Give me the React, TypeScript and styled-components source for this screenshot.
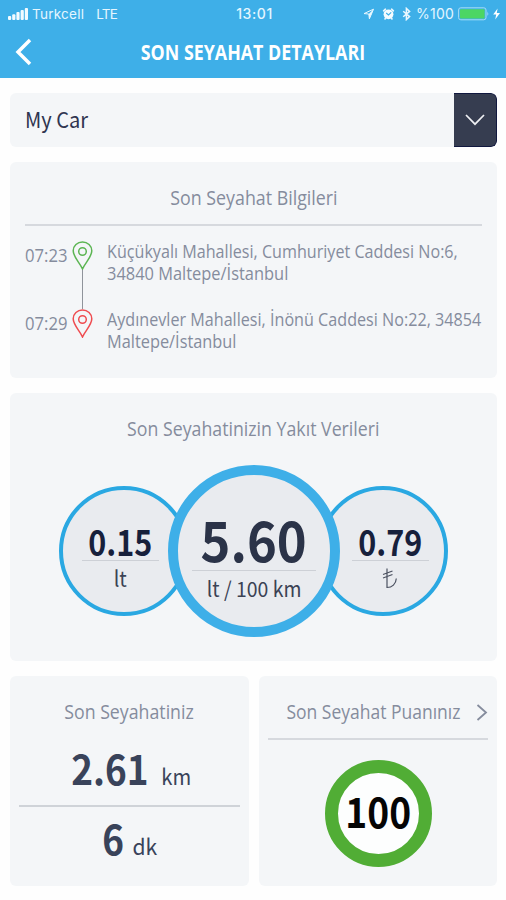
import React from 'react';
import styled, { createGlobalStyle } from 'styled-components';

const humanist = `"Open Sans", "Noto Sans", sans-serif`;
const numeric = `"Noto Sans CJK JP", "Open Sans", sans-serif`;

const GlobalStyle = createGlobalStyle`
  * { box-sizing: border-box; }
  body { margin: 0; background: #fefefe; font-family: ${humanist}; }
`;

/* Condensed text: glyphs are narrowed horizontally around the chosen origin. */
const Text = styled.span<{
  $size: number;
  $line: number;
  $narrow?: number;
  $color?: string;
  $weight?: number;
  $num?: boolean;
  $left?: boolean;
}>`
  display: block;
  white-space: nowrap;
  font-family: ${(p) => (p.$num ? numeric : humanist)};
  font-size: ${(p) => p.$size}px;
  line-height: ${(p) => p.$line}px;
  font-weight: ${(p) => p.$weight ?? 400};
  color: ${(p) => p.$color ?? '#858c9d'};
  transform: scaleX(${(p) => p.$narrow ?? 1});
  transform-origin: ${(p) => (p.$left ? 'left' : 'center')} center;
`;

const Screen = styled.main`
  width: 506px;
  height: 900px;
  overflow: hidden;
  display: flex;
  flex-direction: column;
`;

const Header = styled.header`
  height: 78px;
  flex: none;
  background: #3eafe8;
`;

const StatusBar = styled.div`
  height: 26px;
  display: grid;
  grid-template-columns: 1fr auto 1fr;
  align-items: center;
  padding: 1px 5px 0 8px;
  color: #e4f6ff;
  font: 400 13px/26px Inter, "Liberation Sans", sans-serif;
`;

const StatusGroup = styled.div<{ $end?: boolean }>`
  display: flex;
  align-items: center;
  justify-content: ${(p) => (p.$end ? 'flex-end' : 'flex-start')};
`;

const Carrier = styled.span`
  margin: 0 12px 0 4px;
  font-size: 13.5px;
  letter-spacing: 0.25px;
`;

const Network = styled.span`
  font-size: 13.5px;
  letter-spacing: -0.8px;
`;

const Clock = styled.span`
  font-weight: 500;
  font-size: 14px;
  letter-spacing: 0.6px;
`;

const Percent = styled.span`
  margin: 0 4px 0 4px;
  font-size: 14px;
  letter-spacing: 0.2px;
`;

const NavBar = styled.div`
  height: 52px;
  display: grid;
  grid-template-columns: 46px 1fr 46px;
  align-items: center;
  justify-items: center;
`;

const IconButton = styled.button`
  display: flex;
  padding: 0;
  border: 0;
  background: none;
`;

const Content = styled.div`
  padding: 15px 9px 0 10px;
  display: flex;
  flex-direction: column;
  gap: 15px;
`;

const CarSelect = styled.div`
  height: 54px;
  display: flex;
  align-items: flex-start;
  justify-content: space-between;
  padding-left: 15px;
  border-radius: 6px;
  overflow: hidden;
  background: #f4f6f8;
`;

const CarName = styled.div`
  padding-top: 10px;
`;

const SelectArrow = styled.div`
  width: 43px;
  height: 54px;
  display: flex;
  align-items: center;
  justify-content: center;
  border: 1px solid #11183f;
  border-left: 0;
  border-radius: 0 6px 6px 0;
  background: #363d50;
`;

const Card = styled.section<{ $height: number; $pad?: string }>`
  height: ${(p) => p.$height}px;
  padding: ${(p) => p.$pad ?? '0'};
  display: flex;
  flex-direction: column;
  align-items: center;
  border-radius: 6px;
  background: #f4f6f8;
`;

const Rule = styled.hr<{ $width: string; $color?: string; $thick?: number; $top?: number }>`
  width: ${(p) => p.$width};
  height: ${(p) => p.$thick ?? 2}px;
  flex: none;
  margin: ${(p) => p.$top ?? 0}px 0 0;
  border: 0;
  background: ${(p) => p.$color ?? '#d6d9de'};
`;

const Route = styled.div`
  width: 100%;
  display: grid;
  grid-template-columns: 47px 21px 1fr;
  padding-top: 15px;
`;

const Times = styled.div`
  display: flex;
  flex-direction: column;
  gap: 40px;
`;

const Track = styled.div`
  display: flex;
  flex-direction: column;
  align-items: center;
`;

const TrackLine = styled.span`
  width: 1.5px;
  height: 39px;
  background: #8f949b;
`;

const Addresses = styled.div`
  display: flex;
  flex-direction: column;
  gap: 25px;
  padding-left: 14px;
`;

const Gauges = styled.div`
  display: flex;
  align-items: center;
  justify-content: center;
  margin-top: 21px;
`;

const Gauge = styled.div<{ $big?: boolean; $pad: string }>`
  width: ${(p) => (p.$big ? 172 : 130)}px;
  height: ${(p) => (p.$big ? 172 : 130)}px;
  flex: none;
  margin: ${(p) => (p.$big ? '0 -22px 0 -21px' : '0')};
  padding: ${(p) => p.$pad};
  z-index: ${(p) => (p.$big ? 1 : 0)};
  display: flex;
  flex-direction: column;
  align-items: center;
  border: ${(p) => (p.$big ? 10 : 4)}px solid ${(p) => (p.$big ? '#3eafe8' : '#2aa8e2')};
  border-radius: 50%;
  background: #e9ebef;
`;

const LiraIcon = styled.svg`
  margin-top: 7px;
`;

const BottomRow = styled.div`
  display: grid;
  grid-template-columns: 239px 238px;
  gap: 10px;
`;

const Measure = styled.div<{ $top: number }>`
  display: flex;
  align-items: baseline;
  gap: 7px;
  height: 48px;
  margin-top: ${(p) => p.$top}px;
`;

const ScoreTitle = styled.div`
  width: 100%;
  display: flex;
  align-items: center;
  justify-content: flex-end;
  gap: 3px;
`;

const ScoreRing = styled.div`
  width: 107px;
  height: 107px;
  margin-top: 20px;
  display: flex;
  align-items: flex-start;
  justify-content: center;
  padding-top: 7px;
  border: 13.5px solid #51ad35;
  border-radius: 50%;
  background: #fdfefe;
`;

const Signal = () => (
  <svg width="20" height="12" viewBox="0 0 20 12" fill="#f3fbff">
    <rect x="0" y="8" width="3.2" height="4" rx="1" />
    <rect x="4.2" y="6.2" width="3.2" height="5.8" rx="1" />
    <rect x="8.4" y="4" width="3.2" height="8" rx="1" />
    <rect x="12.6" y="2" width="3.2" height="10" rx="1" />
    <rect x="16.8" y="0" width="3.2" height="12" rx="1" />
  </svg>
);

const StatusIcons = () => (
  <svg width="50" height="14" viewBox="0 0 50 14" fill="none" stroke="#eaf8ff">
    <path d="M2 6.6 11.5 2.2 7.4 11.8 6.8 7Z" strokeWidth="1" strokeLinejoin="round" />
    <path d="M6.8 7 11.5 2.2 7.4 11.8Z" fill="#eaf8ff" stroke="none" />
    <circle cx="26.5" cy="7.3" r="4.9" fill="#f5fcff" stroke="none" />
    <path d="M21.6 3.8 23.4 2.2M31.4 3.8 29.6 2.2M23.6 11 23 12M29.4 11 30 12" strokeWidth="1.6" strokeLinecap="round" />
    <path d="M24.2 6 26.5 8 29.2 5.4" stroke="#3eafe8" strokeWidth="1.1" />
    <path d="M41.2 4.2 47.6 9.6 44.4 12.6V1.4L47.6 4.4 41.2 9.8" strokeWidth="1.5" />
  </svg>
);

const Battery = () => (
  <svg width="43" height="14" viewBox="0 0 43 14" fill="none">
    <rect x="0.6" y="0.8" width="27.4" height="12" rx="2.2" stroke="#a6dcf5" />
    <rect x="2" y="2.2" width="24.6" height="9.2" rx="1" fill="#4cd663" />
    <path d="M29.4 4.6q1.8 2.2 0 4.4Z" fill="#a6dcf5" />
    <path d="M39.6 1.4 35.2 7.6H38.2L37.2 12.4 42 6H38.8Z" fill="#fff" />
  </svg>
);

const Pin = ({ color }: { color: string }) => (
  <svg width="21" height="29" viewBox="0 0 21 29" fill="none" stroke={color} strokeWidth="1.5">
    <path d="M10.5 28C8 22 1.2 16 1.2 9.8A9.3 8.8 0 0 1 19.8 9.8C19.8 16 13 22 10.5 28Z" />
    <circle cx="10.5" cy="10.5" r="3.8" />
  </svg>
);

const sideInk = '#17203b';
const mainInk = '#2b3348';
const unitInk = '#3b4254';
const tripInk = '#39435a';
const hairline = '#cdd0d6';

export default function App() {
  return (
    <>
      <GlobalStyle />
      <Screen>
        <Header>
          <StatusBar>
            <StatusGroup>
              <Signal />
              <Carrier>Turkcell</Carrier>
              <Network>LTE</Network>
            </StatusGroup>
            <Clock>13:01</Clock>
            <StatusGroup $end>
              <StatusIcons />
              <Percent>%100</Percent>
              <Battery />
            </StatusGroup>
          </StatusBar>
          <NavBar>
            <IconButton aria-label="Geri">
              <svg width="18" height="28" viewBox="0 0 18 28" fill="none" stroke="#fff" strokeWidth="3.5">
                <path d="M16 2 4 14 16 26" />
              </svg>
            </IconButton>
            <Text $size={20.5} $line={30} $weight={700} $color="#fff" $narrow={0.87}>
              SON SEYAHAT DETAYLARI
            </Text>
          </NavBar>
        </Header>
        <Content>
          <CarSelect>
            <CarName>
              <Text $num $left $size={22} $line={30} $color="#2f3550" $narrow={0.91}>My Car</Text>
            </CarName>
            <SelectArrow>
              <svg width="20" height="12" viewBox="0 0 20 12" fill="none" stroke="#eef0f3" strokeWidth="1.7">
                <path d="M1 1 10 10.2 19 1" />
              </svg>
            </SelectArrow>
          </CarSelect>

          <Card $height={216} $pad="21px 15px 0">
            <Text $size={20} $line={30} $narrow={0.89}>Son Seyahat Bilgileri</Text>
            <Rule $width="100%" $top={11} />
            <Route>
              <Times>
                <Text $left $size={18.5} $line={28} $narrow={0.9}>07:23</Text>
                <Text $left $size={18.5} $line={28} $narrow={0.9}>07:29</Text>
              </Times>
              <Track>
                <Pin color="#5cb553" />
                <TrackLine />
                <Pin color="#ef4c50" />
              </Track>
              <Addresses>
                <div>
                  <Text $left $size={19} $line={21.5} $narrow={0.849}>Küçükyalı Mahallesi, Cumhuriyet Caddesi No:6,</Text>
                  <Text $left $size={19} $line={21.5} $narrow={0.864}>34840 Maltepe/İstanbul</Text>
                </div>
                <div>
                  <Text $left $size={19} $line={21.5} $narrow={0.85}>Aydınevler Mahallesi, İnönü Caddesi No:22, 34854</Text>
                  <Text $left $size={19} $line={21.5} $narrow={0.86}>Maltepe/İstanbul</Text>
                </div>
              </Addresses>
            </Route>
          </Card>

          <Card $height={268} $pad="21px 0 0">
            <Text $size={20} $line={30} $narrow={0.887}>Son Seyahatinizin Yakıt Verileri</Text>
            <Gauges>
              <Gauge $pad="31px 8px 0 0">
                <Text $num $size={35.5} $line={39} $weight={700} $color={sideInk} $narrow={0.86}>0.15</Text>
                <Rule $width="77px" $thick={1} $color={hairline} />
                <Text $num $size={22} $line={32} $color={unitInk} $narrow={0.9}>lt</Text>
              </Gauge>
              <Gauge $big $pad="33px 0 0">
                <Text $num $size={56} $line={60} $weight={700} $color={mainInk} $narrow={0.905}>5.60</Text>
                <Rule $width="124px" $thick={1} $color={hairline} $top={2} />
                <Text $num $size={21} $line={34} $color={unitInk} $narrow={0.925}>lt / 100 km</Text>
              </Gauge>
              <Gauge $pad="31px 0 0 14px">
                <Text $num $size={35.5} $line={39} $weight={700} $color={sideInk} $narrow={0.86}>0.79</Text>
                <Rule $width="77px" $thick={1} $color={hairline} />
                <LiraIcon width="16" height="21" viewBox="0 0 16 21" fill="none" stroke="#4b5160" strokeWidth="1.2">
                  <path d="M5 .5V19.500C10 19.500 14 16 14.300 10.500M1 6.500 10.500 3M1 10 10.500 6.500" />
                </LiraIcon>
              </Gauge>
            </Gauges>
          </Card>

          <BottomRow>
            <Card $height={210} $pad="21px 9px 0">
              <Text $size={20} $line={30} $narrow={0.887}>Son Seyahatiniz</Text>
              <Measure $top={16}>
                <Text $num $size={41} $line={48} $weight={700} $color={tripInk} $narrow={0.9}>2.61</Text>
                <Text $num $size={22} $line={48} $color={tripInk} $narrow={0.92}>km</Text>
              </Measure>
              <Rule $width="100%" $color="#cfd3d8" $top={14} />
              <Measure $top={6}>
                <Text $num $size={41} $line={48} $weight={700} $color={tripInk} $narrow={0.9}>6</Text>
                <Text $num $size={22} $line={48} $color={tripInk} $narrow={0.96}>dk</Text>
              </Measure>
            </Card>
            <Card $height={210} $pad="21px 9px 0">
              <ScoreTitle>
                <Text $size={20} $line={30} $narrow={0.875}>Son Seyahat Puanınız</Text>
                <svg width="12" height="17" viewBox="0 0 12 17" fill="none" stroke="#858c9d" strokeWidth="1.8">
                  <path d="M1.5 1 10 8.500 1.500 16" />
                </svg>
              </ScoreTitle>
              <Rule $width="100%" $top={11} />
              <ScoreRing>
                <Text $num $size={42} $line={60} $weight={700} $color="#050505" $narrow={0.885}>100</Text>
              </ScoreRing>
            </Card>
          </BottomRow>
        </Content>
      </Screen>
    </>
  );
}
